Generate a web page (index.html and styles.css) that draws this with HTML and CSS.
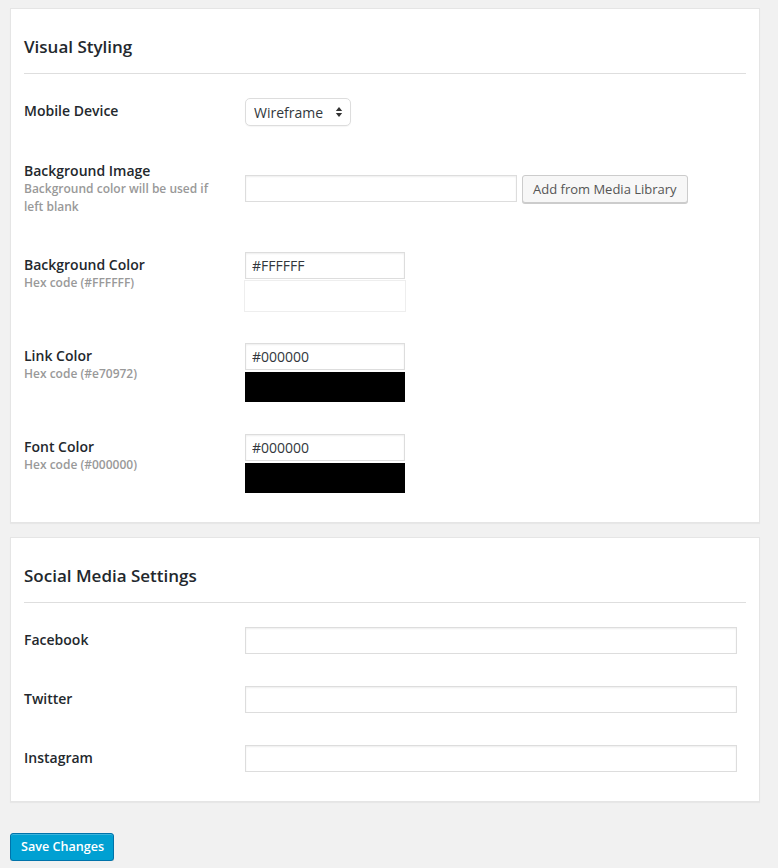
FILE: index.html
```html
<!DOCTYPE html>
<html lang="en">
<head>
<meta charset="utf-8">
<title>Settings</title>
<link rel="stylesheet" href="styles.css">
</head>
<body>
<div class="wrap">
  <form class="settings">
    <section class="card">
      <h2 class="card-title">Visual Styling</h2>
      <div class="form-table">
        <div class="row">
          <div class="th"><label>Mobile Device</label></div>
          <div class="td">
            <span class="select-wrap">
              <select class="select"><option>Wireframe</option></select>
              <svg class="select-arrows" width="8" height="12" viewBox="0 0 8 12" aria-hidden="true">
                <path d="M4 1 L7.2 5 L0.8 5 Z" fill="#333"/>
                <path d="M4 11 L7.2 7 L0.8 7 Z" fill="#333"/>
              </svg>
            </span>
          </div>
        </div>
        <div class="row row-center">
          <div class="th">
            <label>Background Image</label>
            <p class="desc">Background color will be used if left blank</p>
          </div>
          <div class="td td-image">
            <div class="inline">
              <input type="text" class="input input-image">
              <button type="button" class="button">Add from Media Library</button>
            </div>
          </div>
        </div>
        <div class="row">
          <div class="th">
            <label>Background Color</label>
            <p class="desc">Hex code (#FFFFFF)</p>
          </div>
          <div class="td">
            <input type="text" class="input input-color" value="#FFFFFF">
            <div class="swatch swatch-white"></div>
          </div>
        </div>
        <div class="row">
          <div class="th">
            <label>Link Color</label>
            <p class="desc">Hex code (#e70972)</p>
          </div>
          <div class="td">
            <input type="text" class="input input-color" value="#000000">
            <div class="swatch swatch-black"></div>
          </div>
        </div>
        <div class="row">
          <div class="th">
            <label>Font Color</label>
            <p class="desc">Hex code (#000000)</p>
          </div>
          <div class="td">
            <input type="text" class="input input-color" value="#000000">
            <div class="swatch swatch-black"></div>
          </div>
        </div>
      </div>
    </section>

    <section class="card">
      <h2 class="card-title">Social Media Settings</h2>
      <div class="form-table">
        <div class="row">
          <div class="th"><label>Facebook</label></div>
          <div class="td td-wide"><input type="text" class="input input-full"></div>
        </div>
        <div class="row">
          <div class="th"><label>Twitter</label></div>
          <div class="td td-wide"><input type="text" class="input input-full"></div>
        </div>
        <div class="row">
          <div class="th"><label>Instagram</label></div>
          <div class="td td-wide"><input type="text" class="input input-full"></div>
        </div>
      </div>
    </section>

    <div class="submit">
      <button type="button" class="button-primary">Save Changes</button>
    </div>
  </form>
</div>
</body>
</html>
```
FILE: styles.css
```css
* { box-sizing: border-box; }

html, body {
  margin: 0;
  padding: 0;
  background: #f1f1f1;
}

body {
  font-family: "Open Sans", "Noto Sans", sans-serif;
  font-size: 14px;
  color: #23282d;
  line-height: 1.3;
}

.wrap {
  padding: 8px 18px 0 10px;
}

.settings {
  display: flex;
  flex-direction: column;
  gap: 14px;
}

.card {
  background: #fff;
  border: 1px solid #e5e5e5;
  box-shadow: 0 1px 1px rgba(0, 0, 0, 0.04);
  padding: 0 13px 13px;
}

.card-title {
  margin: 0;
  padding: 26px 0 15px;
  font-size: 17px;
  line-height: 23px;
  font-weight: 600;
  color: #23282d;
  border-bottom: 1px solid #dedede;
}

.form-table {
  margin-top: 8px;
  display: flex;
  flex-direction: column;
}

.row {
  display: grid;
  grid-template-columns: 210px 1fr;
  align-items: start;
}

.th {
  padding: 20px 10px 20px 0;
}

.th label {
  display: block;
  font-weight: 600;
  font-size: 14px;
  line-height: 18px;
  color: #23282d;
}

.desc {
  margin: 0;
  font-size: 12px;
  line-height: 18px;
  font-weight: 600;
  color: #999;
}

.td {
  padding: 15px 10px;
  align-self: center;
}

.td-image {
  padding-bottom: 16px;
}

.td-wide {
  padding-right: 8px;
}

.inline {
  display: flex;
  align-items: center;
  gap: 4px;
}

.input {
  display: block;
  margin: 1px;
  height: 27px;
  padding: 3px 6px;
  font-family: "Open Sans", "Noto Sans", sans-serif;
  font-size: 14px;
  color: #32373c;
  background: #fff;
  border: 1px solid #ddd;
  box-shadow: inset 0 1px 2px rgba(0, 0, 0, 0.07);
  border-radius: 0;
  outline: none;
}

.input-image { width: 272px; }
.input-color { width: 160px; }
.input-full { width: calc(100% - 2px); }

.swatch {
  width: 162px;
  height: 32px;
}

.swatch-white {
  background: #fff;
  border: 1px solid #eee;
}

.swatch-black {
  background: #000;
  border: 1px solid #fff;
}

.select-wrap {
  position: relative;
  display: inline-block;
  margin: 1px;
}

.select {
  display: block;
  -webkit-appearance: none;
  appearance: none;
  width: 106px;
  height: 28px;
  padding: 2px 24px 2px 8px;
  font-family: "Open Sans", "Noto Sans", sans-serif;
  font-size: 14px;
  color: #32373c;
  background: #fff;
  border: 1px solid #ddd;
  border-radius: 5px;
  box-shadow: 0 1px 1px rgba(0, 0, 0, 0.04);
  outline: none;
}

.select-arrows {
  position: absolute;
  right: 8px;
  top: 8px;
  pointer-events: none;
}

.button {
  height: 28px;
  padding: 0 10px;
  font-family: "Open Sans", "Noto Sans", sans-serif;
  font-size: 13px;
  line-height: 26px;
  color: #555;
  background: #f7f7f7;
  border: 1px solid #ccc;
  border-radius: 3px;
  box-shadow: 0 1px 0 #ccc;
  white-space: nowrap;
  cursor: pointer;
}

.submit {
  padding-top: 17px;
}

.button-primary {
  height: 28px;
  padding: 0 9px 0 10px;
  font-family: "Open Sans", "Noto Sans", sans-serif;
  font-size: 12.6px;
  font-weight: 600;
  line-height: 26px;
  color: #fff;
  background: #00a0d2;
  border: 1px solid #0073aa;
  border-radius: 3px;
  box-shadow: inset 0 1px 0 rgba(120, 200, 230, 0.5), 0 1px 0 rgba(0, 0, 0, 0.15);
  cursor: pointer;
}
```
